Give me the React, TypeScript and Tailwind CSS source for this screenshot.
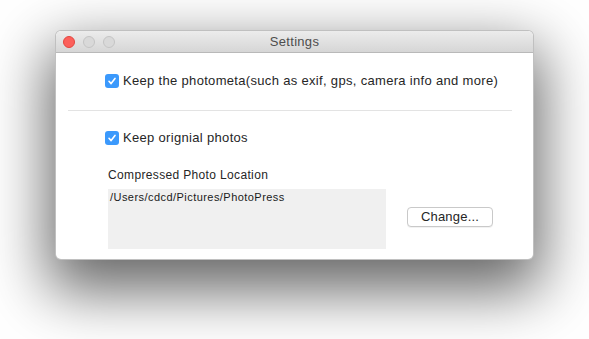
import React from "react";

function Check() {
  return (
    <span className="flex h-[14px] w-[14px] items-center justify-center rounded-[3px] bg-[#3b99fc]">
      <svg width="10" height="10" viewBox="0 0 10 10">
        <path d="M2 5.3 L4.1 7.6 L8 2.4" fill="none" stroke="#fff" strokeWidth="1.6" strokeLinecap="round" strokeLinejoin="round" />
      </svg>
    </span>
  );
}

export default function App() {
  return (
    <div className="h-[339px] w-[589px] bg-white pl-[56px] pt-[31px]" style={{ fontFamily: '"Liberation Sans", Arial, sans-serif' }}>
      <div className="flex h-[228px] w-[477px] flex-col overflow-hidden rounded-[5px] bg-white shadow-[0_24px_60px_8px_rgba(0,0,0,0.6)] ring-1 ring-[#c0c0c0]">
        <div className="relative flex h-[22px] items-center justify-center border-b border-[#b9b9b9] bg-gradient-to-b from-[#ececec] to-[#d6d6d6]">
          <div className="absolute left-[7px] top-[5px] flex gap-[8px]">
            <span className="h-[12px] w-[12px] rounded-full border border-[#e2463f] bg-[#fc605b]" />
            <span className="h-[12px] w-[12px] rounded-full border border-[#c4c4c4] bg-[#d9d9d9]" />
            <span className="h-[12px] w-[12px] rounded-full border border-[#c4c4c4] bg-[#d9d9d9]" />
          </div>
          <span className="text-[13px] tracking-[0.3px] text-[#4d4d4d]">Settings</span>
        </div>
        <div className="flex flex-col pt-[21px]">
          <div className="flex items-center gap-[4px] pl-[49px]">
            <Check />
            <span className="text-[13px] leading-[14px] tracking-[0.32px] text-[#262626]">Keep the photometa(such as exif, gps, camera info and more)</span>
          </div>
          <div className="ml-[12px] mt-[22px] h-px w-[444px] bg-[#e3e3e3]" />
          <div className="mt-[20px] flex items-center gap-[4px] pl-[49px]">
            <Check />
            <span className="text-[13px] leading-[14px] tracking-[0.32px] text-[#262626]">Keep orignial photos</span>
          </div>
          <div className="mt-[23px] pl-[52px] text-[12px] leading-[14px] tracking-[0.35px] text-[#262626]">Compressed Photo Location</div>
          <div className="mt-[7px] flex items-end pl-[52px]">
            <div className="h-[60px] w-[278px] bg-[#f0f0f0] px-[2px] pt-[1px] text-[11px] leading-[14px] tracking-[0.45px] text-[#1a1a1a]">/Users/cdcd/Pictures/PhotoPress</div>
            <button className="mb-[22px] ml-[21px] flex h-[20px] w-[86px] items-center justify-center rounded-[4px] border border-[#c9c9c9] bg-white text-[13px] tracking-[0.2px] text-[#262626] shadow-[0_1px_0_rgba(0,0,0,0.05)]">Change...</button>
          </div>
        </div>
      </div>
    </div>
  );
}
